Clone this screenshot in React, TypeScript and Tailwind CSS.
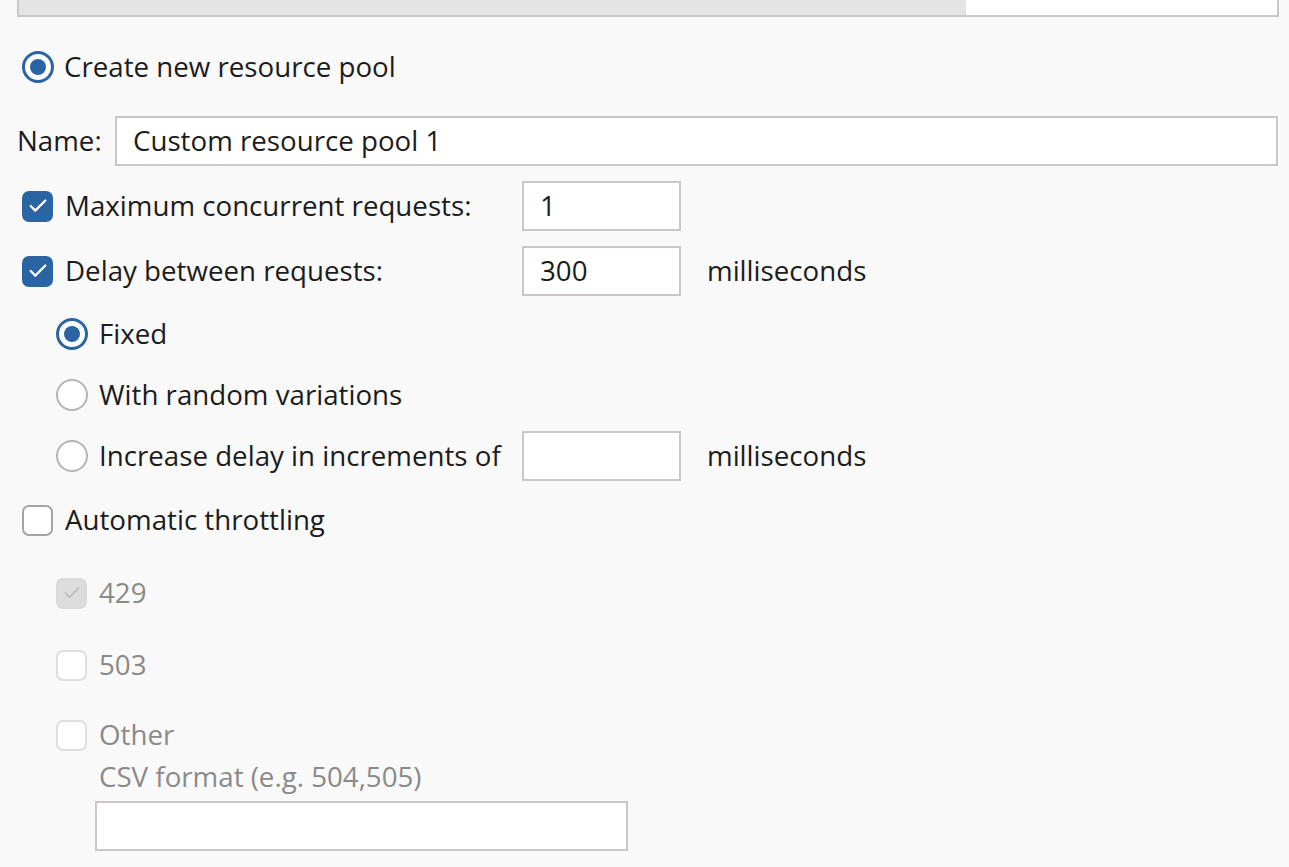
import { Check } from 'lucide-react';

type BoxProps = { checked?: boolean; disabled?: boolean };

function CheckBox({ checked, disabled }: BoxProps) {
    if (disabled) {
        return (
            <span
                className={`flex h-[31px] w-[31px] shrink-0 items-center justify-center rounded-[7px] border-2 ${
                    checked ? 'border-[#dadada] bg-[#dcdcdc]' : 'border-[#dedede] bg-white'
                }`}
            >
                {checked && <Check size={20} strokeWidth={2} color="#b9b9b9" />}
            </span>
        );
    }
    return checked ? (
        <span className="flex h-[31px] w-[31px] shrink-0 items-center justify-center rounded-[7px] bg-[#2a64a2]">
            <Check size={22} strokeWidth={2.5} color="#ffffff" />
        </span>
    ) : (
        <span className="h-[31px] w-[31px] shrink-0 rounded-[7px] border-2 border-[#a4a4a4] bg-white" />
    );
}

function Radio({ checked }: { checked?: boolean }) {
    return checked ? (
        <span className="flex h-[32px] w-[32px] shrink-0 items-center justify-center rounded-full border-[3px] border-[#2a64a2] bg-white">
            <span className="h-[16px] w-[16px] rounded-full bg-[#2a64a2]" />
        </span>
    ) : (
        <span className="h-[32px] w-[32px] shrink-0 rounded-full border-2 border-[#b4b4b4] bg-white" />
    );
}

function TextBox({ value, className }: { value?: string; className: string }) {
    return (
        <div
            className={`flex h-[50px] items-center border-2 border-[#cac6ca] bg-white px-[16px] ${className}`}
        >
            {value}
        </div>
    );
}

export default function App() {
    return (
        <div
            className="h-[867px] w-full overflow-hidden bg-[#f9f9f9] text-[27.7px] leading-none text-[#1c1c1c]"
            style={{ fontFamily: '"Open Sans", "Noto Sans", sans-serif' }}
        >
            {/* cut-off table above */}
            <div className="ml-[17px] flex h-[17px] w-[1262px] border-x-2 border-b-2 border-[#cac6ca]">
                <div className="w-[947px] bg-[#e4e4e4]" />
                <div className="flex-1 bg-white" />
            </div>

            <div className="mt-[25px] flex h-[50px] items-center pl-[22px]">
                <Radio checked />
                <span className="ml-[10px]">Create new resource pool</span>
            </div>

            <div className="mt-[24px] flex h-[50px] items-center pl-[17px] pr-[11px]">
                <span className="w-[98px]">Name:</span>
                <TextBox value="Custom resource pool 1" className="flex-1" />
            </div>

            <div className="mt-[15px] flex h-[50px] items-center pl-[22px]">
                <CheckBox checked />
                <span className="ml-[12px] w-[457px]">Maximum concurrent requests:</span>
                <TextBox value="1" className="w-[159px]" />
            </div>

            <div className="mt-[15px] flex h-[50px] items-center pl-[22px]">
                <CheckBox checked />
                <span className="ml-[12px] w-[457px]">Delay between requests:</span>
                <TextBox value="300" className="w-[159px]" />
                <span className="ml-[26px]">milliseconds</span>
            </div>

            <div className="mt-[13px] flex h-[50px] items-center pl-[56px]">
                <Radio checked />
                <span className="ml-[11px]">Fixed</span>
            </div>

            <div className="mt-[11px] flex h-[50px] items-center pl-[56px]">
                <Radio />
                <span className="ml-[11px]">With random variations</span>
            </div>

            <div className="mt-[11px] flex h-[50px] items-center pl-[56px]">
                <Radio />
                <span className="ml-[11px] w-[423px]">Increase delay in increments of</span>
                <TextBox className="w-[159px]" />
                <span className="ml-[26px]">milliseconds</span>
            </div>

            <div className="mt-[14px] flex h-[50px] items-center pl-[22px]">
                <CheckBox />
                <span className="ml-[12px]">Automatic throttling</span>
            </div>

            <div className="text-[#8a8a8a]">
                <div className="mt-[23px] flex h-[50px] items-center pl-[56px]">
                    <CheckBox checked disabled />
                    <span className="ml-[12px]">429</span>
                </div>

                <div className="mt-[22px] flex h-[50px] items-center pl-[56px]">
                    <CheckBox disabled />
                    <span className="ml-[12px]">503</span>
                </div>

                <div className="mt-[20px] flex h-[50px] items-center pl-[56px]">
                    <CheckBox disabled />
                    <span className="ml-[12px]">Other</span>
                </div>

                <div className="mt-[2px] flex h-[30px] items-center pl-[99px]">
                    CSV format (e.g. 504,505)
                </div>

                <div className="mt-[9px] pl-[95px]">
                    <TextBox className="w-[533px]" />
                </div>
            </div>
        </div>
    );
}
